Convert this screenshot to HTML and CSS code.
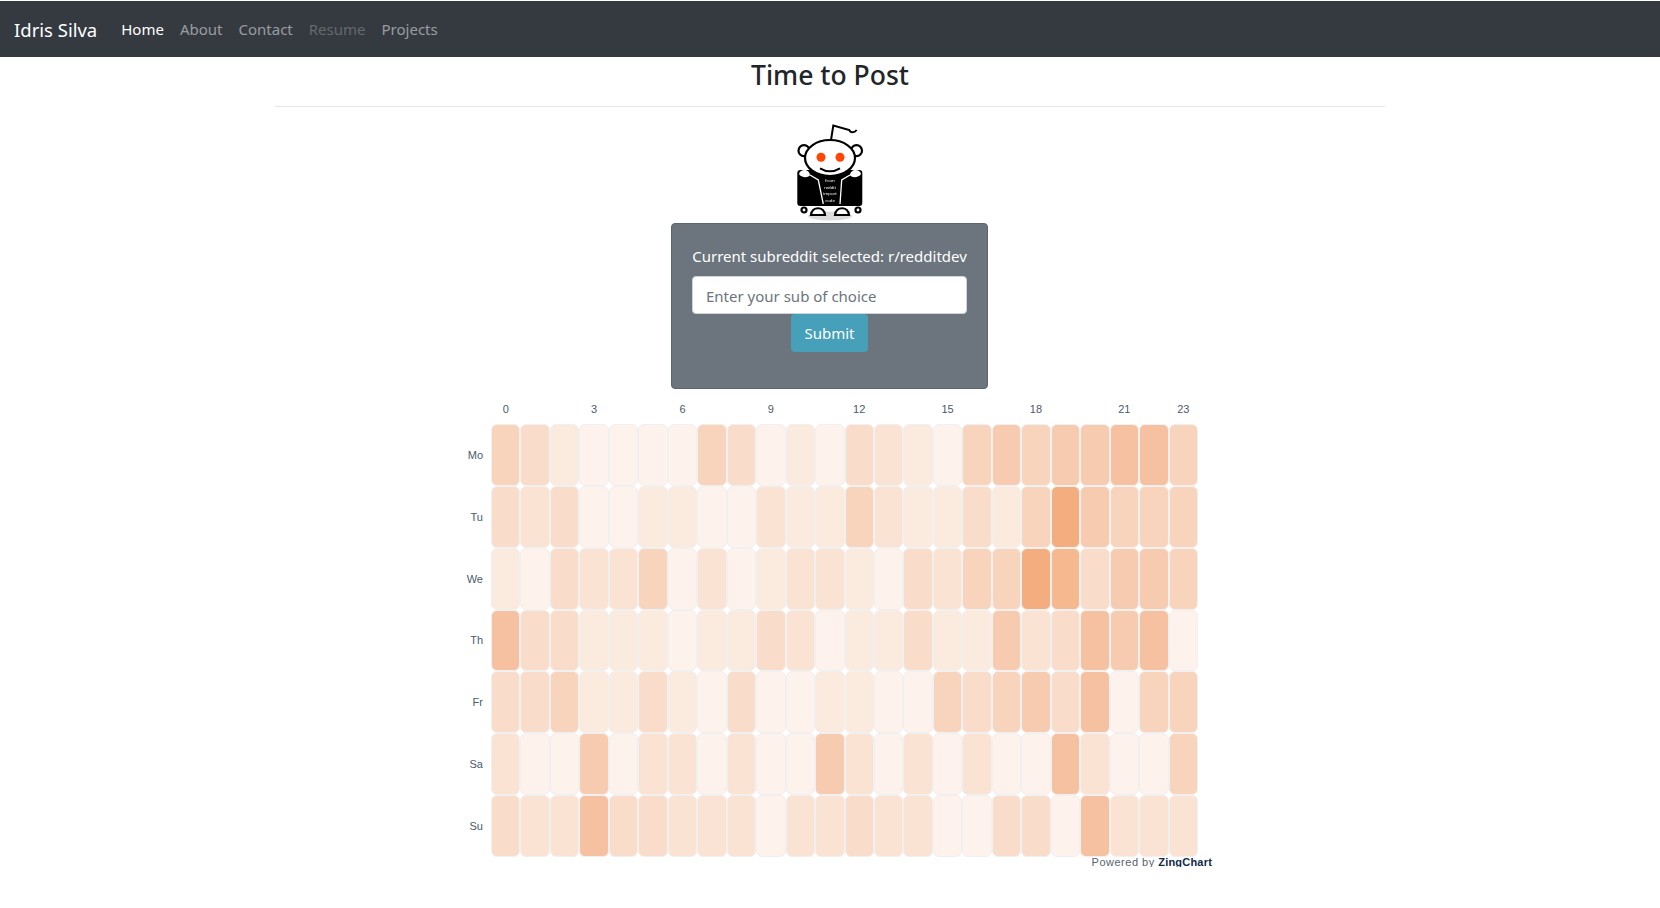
FILE: index.html
```html
<!DOCTYPE html>
<html lang="en">
<head>
  <meta charset="UTF-8">
  <title>Time to Post</title>
  <link rel="stylesheet" href="styles.css">
</head>
<body>
  <nav class="navbar">
    <a class="brand" href="#">Idris Silva</a>
    <a class="nav-link active" href="#">Home</a>
    <a class="nav-link" href="#">About</a>
    <a class="nav-link" href="#">Contact</a>
    <a class="nav-link disabled" href="#">Resume</a>
    <a class="nav-link" href="#">Projects</a>
  </nav>

  <main class="container">
    <h2 class="title">Time to Post</h2>
    <hr class="rule">

    <svg class="logo" viewBox="0 0 68 98" width="68" height="98">
      <ellipse cx="34" cy="92" rx="22" ry="4.500" fill="#ddd"/>
      <path d="M34.700 18 37.300 1.500 53.300 6c1 3 5 3 7.400 0" fill="none" stroke="#000" stroke-width="2"/>
      <rect x="1.300" y="46" width="65" height="36" rx="3" fill="#000"/>
      <circle cx="8" cy="26.700" r="5.500" fill="#fff" stroke="#000" stroke-width="2.200"/>
      <circle cx="60.500" cy="26.700" r="5.500" fill="#fff" stroke="#000" stroke-width="2.200"/>
      <ellipse cx="34" cy="34" rx="25" ry="18" fill="#fff" stroke="#000" stroke-width="2.200"/>
      <circle cx="25" cy="33.300" r="4.500" fill="#ff4500"/>
      <circle cx="44" cy="33.300" r="4.500" fill="#ff4500"/>
      <path d="M24 44.300q10 6 20 0" fill="none" stroke="#000" stroke-width="2"/>
      <path d="M3 50c1-5 10-6 11 1-1 3-9 3-11-1zM54 51c1-7 10-6 11-1-2 4-10 4-11 1z" fill="#fff"/>
      <path d="M14 51l8.300 5 5 24M54 51l-8.300 5-1.700 24" fill="none" stroke="#fff" stroke-width="1.300"/>
      <path d="M15 91c1-9 13-9 14 0zM39 91c1-9 13-9 14 0z" fill="#fff" stroke="#000" stroke-width="2.200"/>
      <circle cx="8" cy="86" r="2.500" fill="#fff" stroke="#000" stroke-width="2.200"/>
      <circle cx="62" cy="86" r="2.500" fill="#fff" stroke="#000" stroke-width="2.200"/>
      <text class="logo-text" x="34" y="58">from</text>
      <text class="logo-text" x="34" y="64.500">reddit</text>
      <text class="logo-text" x="34" y="71">import</text>
      <text class="logo-text" x="34" y="77.500">code</text>
    </svg>

    <form class="sub-card">
      <p class="current-sub">Current subreddit selected: r/redditdev</p>
      <input class="sub-input" type="text" placeholder="Enter your sub of choice">
      <button class="btn-submit" type="button">Submit</button>
    </form>

    <section class="chart">
      <div class="hours" id="hours"></div>
      <div class="chart-body">
        <div class="days" id="days"></div>
        <div class="cells" id="cells"></div>
      </div>
      <p class="powered">Powered by <b>ZingChart</b></p>
    </section>
  </main>

  <script src="script.js"></script>
</body>
</html>
```

FILE: styles.css
```css
* {
  box-sizing: border-box;
}

body {
  margin: 0;
  font-family: "Noto Sans", "Open Sans", sans-serif;
  background-color: #fff;
  color: #212529;
}

.navbar {
  display: flex;
  align-items: center;
  height: 56px;
  margin-top: 1px;
  padding: 0 14px;
  background-color: #343a40;
}

.brand {
  margin-right: 16px;
  font-size: 18.500px;
  color: #fff;
  text-decoration: none;
}

.nav-link {
  padding: 0 8px;
  font-size: 15px;
  color: rgba(255, 255, 255, 0.5);
  text-decoration: none;
}

.nav-link.active {
  color: #fff;
}

.nav-link.disabled {
  color: rgba(255, 255, 255, 0.25);
}

.container {
  display: flex;
  flex-direction: column;
  align-items: center;
  width: 1110px;
  margin: 0 auto;
}

.title {
  margin: 0;
  height: 49px;
  font-size: 26.500px;
  font-weight: 500;
  line-height: 36px;
}

.rule {
  width: 100%;
  margin: 0 0 17px;
  border: 0;
  border-top: 1px solid #e5e5e5;
}

.logo {
  display: block;
  filter: blur(0.4px);
}

.logo-text {
  font-size: 4.300px;
  fill: #fff;
  text-anchor: middle;
}

.sub-card {
  display: flex;
  flex-direction: column;
  align-items: center;
  width: 317px;
  height: 166px;
  margin: 1px 1px 0 0;
  padding: 21px 20px 0;
  background-color: #6c757d;
  border: 1px solid #5d646b;
  border-radius: 4px;
}

.current-sub {
  margin: 0 0 9px;
  font-size: 15px;
  line-height: 22px;
  color: #fff;
  white-space: nowrap;
}

.sub-input {
  width: 100%;
  height: 38px;
  padding: 8px 13px 6px;
  font: inherit;
  font-size: 15px;
  color: #495057;
  background: #fff;
  border: 1px solid #ced4da;
  border-radius: 4px;
}

.sub-input::placeholder {
  color: #6c757d;
}

.btn-submit {
  width: 77px;
  height: 38px;
  padding: 0;
  font: inherit;
  font-size: 15px;
  color: #fff;
  background-color: #46a0b9;
  border: none;
  border-radius: 4px;
}

.chart {
  width: 800px;
  margin-top: 11px;
  font-family: "Liberation Sans", sans-serif;
  font-size: 11px;
  color: #4a5b6b;
}

.hours {
  display: grid;
  grid-template-columns: repeat(24, 1fr);
  width: 707px;
  height: 24px;
  margin-left: 61px;
  line-height: 18px;
  text-align: center;
}

.chart-body {
  display: flex;
}

.days {
  display: grid;
  grid-template-rows: repeat(7, 1fr);
  width: 61px;
  padding-right: 8px;
  text-align: right;
  align-items: center;
}

.cells {
  display: grid;
  grid-template-columns: repeat(24, 1fr);
  grid-template-rows: repeat(7, 1fr);
  width: 707px;
  height: 433px;
}

.cell {
  border: 1px solid #f0f0f0;
  border-radius: 6px;
}

.l0 { background-color: #fdf2ec; }
.l1 { background-color: #fbeade; }
.l2 { background-color: #fbe3d4; }
.l3 { background-color: #fadccb; }
.l4 { background-color: #f9d4bd; }
.l5 { background-color: #f7cbaf; }
.l6 { background-color: #f6c1a0; }
.l7 { background-color: #f5b88f; }
.l8 { background-color: #f4ad7f; }

.powered {
  margin: 0;
  padding-right: 18px;
  line-height: 10px;
  text-align: right;
  color: #59626c;
  letter-spacing: 0.5px;
}

.powered b {
  color: #0f2a47;
  letter-spacing: 0.2px;
}
```

FILE: script.js
```js
// Heatmap values, one string per day, one digit per hour
var rows = [
  ['Mo', '431000043010321045455664'],
  ['Tu', '323001100211421131485444'],
  ['We', '103224020122103244873554'],
  ['Th', '633111011320113115236560'],
  ['Fr', '334113103001100434536044'],
  ['Sa', '200502202005202020062004'],
  ['Su', '322633222022322003306222']
];

var hours = document.getElementById('hours');
var labels = { 0: 1, 3: 1, 6: 1, 9: 1, 12: 1, 15: 1, 18: 1, 21: 1, 23: 1 };
for (var h = 0; h < 24; h++) {
  var hour = document.createElement('span');
  hour.textContent = labels[h] ? h : '';
  hours.appendChild(hour);
}

var days = document.getElementById('days');
var cells = document.getElementById('cells');
rows.forEach(function (row) {
  var day = document.createElement('span');
  day.textContent = row[0];
  days.appendChild(day);

  row[1].split('').forEach(function (v) {
    var cell = document.createElement('div');
    cell.className = 'cell l' + v;
    cells.appendChild(cell);
  });
});
```
